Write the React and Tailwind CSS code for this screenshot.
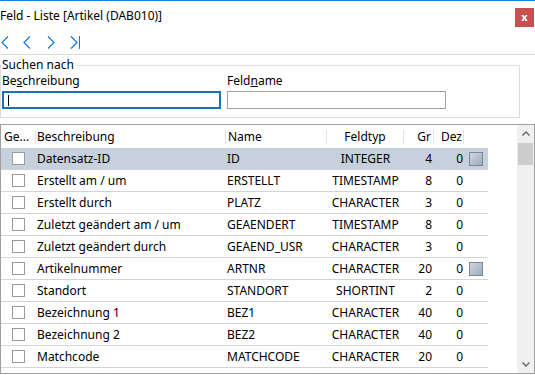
import React from 'react';

const rows = [
  ['Datensatz-ID', 'ID', 'INTEGER', '4', '0', true],
  ['Erstellt am / um', 'ERSTELLT', 'TIMESTAMP', '8', '0', false],
  ['Erstellt durch', 'PLATZ', 'CHARACTER', '3', '0', false],
  ['Zuletzt geändert am / um', 'GEAENDERT', 'TIMESTAMP', '8', '0', false],
  ['Zuletzt geändert durch', 'GEAEND_USR', 'CHARACTER', '3', '0', false],
  ['Artikelnummer', 'ARTNR', 'CHARACTER', '20', '0', true],
  ['Standort', 'STANDORT', 'SHORTINT', '2', '0', false],
  ['Bezeichnung 1', 'BEZ1', 'CHARACTER', '40', '0', false],
  ['Bezeichnung 2', 'BEZ2', 'CHARACTER', '40', '0', false],
  ['Matchcode', 'MATCHCODE', 'CHARACTER', '20', '0', false],
];

function Chevron({ dir }) {
  const pts = dir === 'left' ? '7,0.5 1,6.5 7,12.5' : '1,0.5 7,6.5 1,12.5';
  return (
    <svg width="8" height="13" viewBox="0 0 8 13">
      <polyline points={pts} fill="none" stroke="#1479cf" strokeWidth="1.2" />
    </svg>
  );
}

function Sep() {
  return <div className="w-px h-[14px] bg-[#e3e3e3]" />;
}

function Square() {
  return <div className="w-[14px] h-[14px] border border-[#7d8898] bg-gradient-to-br from-[#cfd6e0] to-[#9eabbd]" />;
}

export default function App() {
  return (
    <div
      className="w-[535px] h-[375px] bg-white overflow-hidden text-[12px] text-black"
      style={{ fontFamily: '"Noto Sans", "Open Sans", sans-serif' }}
    >
      <div className="h-px bg-[#1883d7]" />
      <div className="h-[30px] flex items-center justify-between">
        <span className="leading-none">Feld - Liste [Artikel (DAB010)]</span>
        <div className="self-start mt-[7px] mr-[1px] w-[19px] h-[19px] bg-[#c75050] flex items-center justify-center text-white font-bold text-[11px] leading-none pb-[2px]">
          x
        </div>
      </div>
      <div className="h-[23px] flex items-center">
        <div className="ml-[1px]"><Chevron dir="left" /></div>
        <div className="ml-[14px]"><Chevron dir="left" /></div>
        <div className="ml-[16px]"><Chevron dir="right" /></div>
        <div className="ml-[15px] flex items-center">
          <Chevron dir="right" />
          <div className="w-px h-[13px] bg-[#1479cf] ml-[1px]" />
        </div>
      </div>
      <div className="h-px bg-[#dadada]" />

      <fieldset className="mt-[2px] w-[520px] border border-[#dcdcdc] pl-[1px] pb-[8px]">
        <legend className="leading-[16px] pr-[3px]">Suchen nach</legend>
        <div className="flex gap-[6px]">
          <div className="w-[219px]">
            <div className="leading-[16px]">Be<u>s</u>chreibung</div>
            <div className="mt-[2px] h-[18px] border-2 border-[#1572b5] flex items-center pl-[4px]">
              <div className="w-px h-[11px] bg-black" />
            </div>
          </div>
          <div className="w-[219px]">
            <div className="leading-[16px]">Feld<u>n</u>ame</div>
            <div className="mt-[2px] h-[18px] border border-[#a0a0a0]" />
          </div>
        </div>
      </fieldset>

      <div className="mt-[6px] h-[250px] border border-[#a0a0a0] flex">
        <div className="w-[487px]">
          <div className="h-[23px] flex items-center">
            <div className="w-[34px] pl-[3px]">Ge...</div>
            <Sep />
            <div className="w-[189px] pl-[1px]">Beschreibung</div>
            <Sep />
            <div className="w-[100px] pl-[2px]">Name</div>
            <Sep />
            <div className="w-[76px] text-center">Feldtyp</div>
            <Sep />
            <div className="w-[29px] text-right pr-[2px]">Gr</div>
            <Sep />
            <div className="w-[29px] text-right pr-[1px]">Dez</div>
            <Sep />
            <div className="w-[24px]" />
          </div>
          {rows.map(([desc, name, type, gr, dez, sq], i) => (
            <div
              key={name}
              className={`h-[22px] flex items-center border-b border-[#d4d4d4] ${i === 0 ? 'bg-[#c6d1dd]' : ''}`}
            >
              <div className="w-[35px] flex justify-center">
                <div className="w-[13px] h-[13px] border border-[#9a9a9a] bg-white" />
              </div>
              <div className="w-[190px] pl-[1px] whitespace-nowrap">{desc}</div>
              <div className="w-[101px] pl-[1px] whitespace-nowrap">{name}</div>
              <div className="w-[77px] text-center whitespace-nowrap">{type}</div>
              <div className="w-[30px] text-right pr-[2px]">{gr}</div>
              <div className="w-[30px] text-right pr-[1px]">{dez}</div>
              <div className="w-[24px] pl-[5px]">{sq && <Square />}</div>
            </div>
          ))}
        </div>
        <div className="flex-1" />
        <div className="w-[17px] bg-[#f0f0f0] flex flex-col">
          <div className="h-[17px] flex items-center justify-center">
            <svg width="8" height="5" viewBox="0 0 8 5">
              <polyline points="0.5,4.5 4,1 7.5,4.5" fill="none" stroke="#606060" strokeWidth="1.3" />
            </svg>
          </div>
          <div className="mt-[1px] mx-[1px] h-[22px] bg-[#cdcdcd]" />
          <div className="flex-1" />
          <div className="h-[17px] flex items-center justify-center">
            <svg width="8" height="5" viewBox="0 0 8 5">
              <polyline points="0.5,0.5 4,4 7.5,0.5" fill="none" stroke="#606060" strokeWidth="1.3" />
            </svg>
          </div>
        </div>
      </div>
    </div>
  );
}
